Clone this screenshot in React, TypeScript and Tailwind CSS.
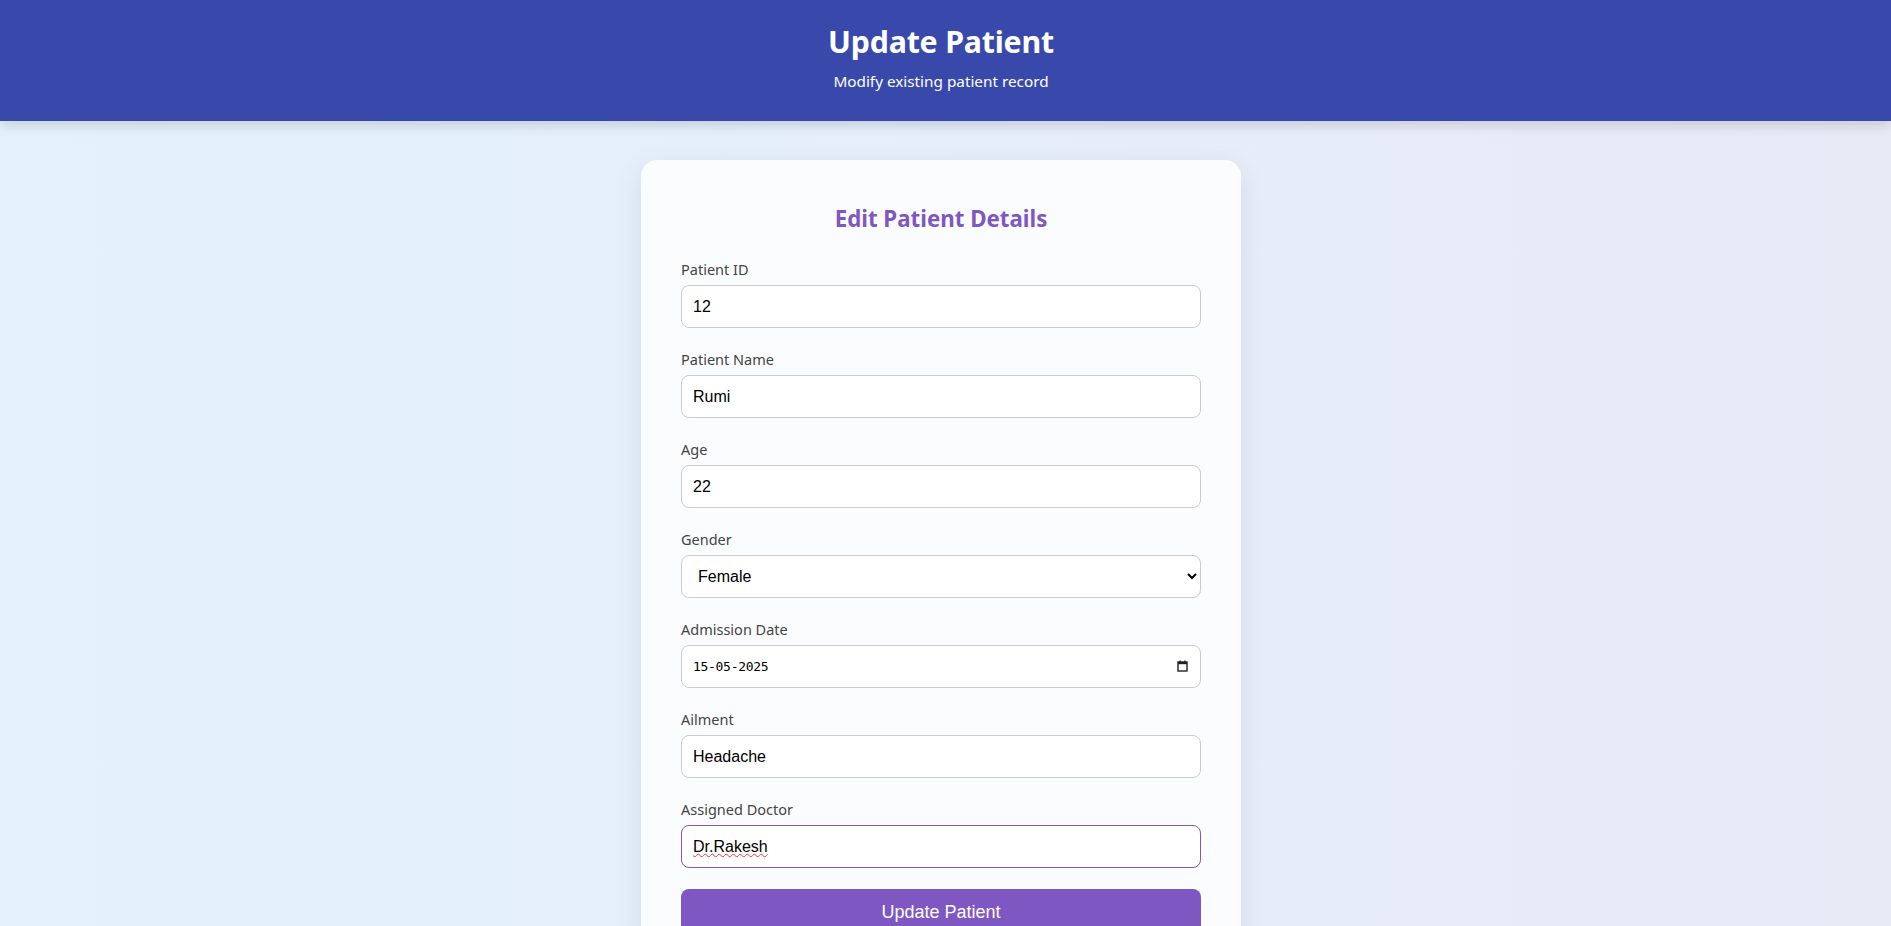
import { useState } from "react";

// ── Types ──────────────────────────────────────────────────────────────────
type Field = {
  id: string;
  label: string;
  value: string;
};

// ── Data ───────────────────────────────────────────────────────────────────
const topFields: Field[] = [
  { id: "pid", label: "Patient ID", value: "12" },
  { id: "name", label: "Patient Name", value: "Rumi" },
  { id: "age", label: "Age", value: "22" },
];

const labelCls = "block text-[14.5px] leading-[24px] text-[#444] mb-[4px]";
const inputCls =
  "block w-full h-[43px] px-[11px] rounded-lg border border-[#ccc] bg-white text-[16px] text-black font-['Liberation_Sans',Arial,sans-serif] outline-none";

function CalendarIcon() {
  return (
    <svg width="11" height="12" viewBox="0 0 11 12" className="text-[#222]">
      <rect x="1" y="2" width="9" height="9" fill="none" stroke="currentColor" strokeWidth="1.4" />
      <rect x="1" y="2" width="9" height="2.2" fill="currentColor" />
      <rect x="2.5" y="0.5" width="1.3" height="2" fill="currentColor" />
      <rect x="7.2" y="0.5" width="1.3" height="2" fill="currentColor" />
    </svg>
  );
}

// ── Component ──────────────────────────────────────────────────────────────
export default function App() {
  const [gender, setGender] = useState("Female");

  return (
    <div className="min-h-screen bg-gradient-to-r from-[#e3f2fd] to-[#e8eaf6] font-['Noto_Sans','Open_Sans',sans-serif]">
      {/* ── HEADER ── */}
      <header className="relative z-10 h-[121px] bg-[#3949ab] text-white flex flex-col items-center pt-[20px] pr-[9px] shadow-[0_4px_12px_rgba(0,0,0,0.15)]">
        <h1 className="text-[30.3px] leading-[44px] font-bold tracking-[-0.2px]">Update Patient</h1>
        <p className="text-[15.3px] leading-[20px] mt-[7px]">Modify existing patient record</p>
      </header>

      {/* ── FORM CARD ── */}
      <main className="flex justify-center pt-[39px] pb-10 pr-[9px]">
        <div className="w-[600px] bg-[#fbfcfe] rounded-2xl px-10 pt-[42px] pb-10 shadow-[0_8px_30px_rgba(0,0,0,0.08)]">
          <h2 className="text-center text-[22.3px] leading-[34px] font-bold text-[#7e57c2] mb-[21px]">
            Edit Patient Details
          </h2>

          <form className="flex flex-col gap-[19px]" onSubmit={(e) => e.preventDefault()}>
            {topFields.map((f) => (
              <div key={f.id}>
                <label htmlFor={f.id} className={labelCls}>{f.label}</label>
                <input id={f.id} className={inputCls} defaultValue={f.value} />
              </div>
            ))}

            <div>
              <label htmlFor="gender" className={labelCls}>Gender</label>
              <select
                id="gender"
                value={gender}
                onChange={(e) => setGender(e.target.value)}
                className={inputCls + " px-[12px]"}
              >
                <option>Male</option>
                <option>Female</option>
                <option>Other</option>
              </select>
            </div>

            <div>
              <label htmlFor="adate" className={labelCls}>Admission Date</label>
              <div className="relative">
                <input
                  id="adate"
                  readOnly
                  value="15-05-2025"
                  className="block w-full h-[43px] px-[11px] rounded-lg border border-[#ccc] bg-white text-[13px] text-black font-['DejaVu_Sans_Mono','Liberation_Mono',monospace] tracking-[-0.3px] outline-none"
                />
                <span className="absolute right-[13px] top-[15px] flex">
                  <CalendarIcon />
                </span>
              </div>
            </div>

            <div>
              <label htmlFor="ailment" className={labelCls}>Ailment</label>
              <input id="ailment" className={inputCls} defaultValue="Headache" />
            </div>

            <div>
              <label htmlFor="doctor" className={labelCls}>Assigned Doctor</label>
              <div className="relative">
                <input
                  id="doctor"
                  className={inputCls + " !border-[#7e57c2]"}
                  defaultValue="Dr.Rakesh"
                />
                {/* spell-check squiggle */}
                <span className="pointer-events-none absolute left-[12px] top-[11px] text-[16px] leading-[18px] text-transparent font-['Liberation_Sans',Arial,sans-serif] underline decoration-wavy decoration-[#e53935] decoration-1 underline-offset-[3px]">
                  Dr.Rakesh
                </span>
              </div>
            </div>

            <button
              type="submit"
              className="mt-[2px] h-[46px] w-full rounded-lg bg-[#7e57c2] text-white text-[18px] font-['Liberation_Sans',Arial,sans-serif]"
            >
              Update Patient
            </button>
          </form>
        </div>
      </main>
    </div>
  );
}
